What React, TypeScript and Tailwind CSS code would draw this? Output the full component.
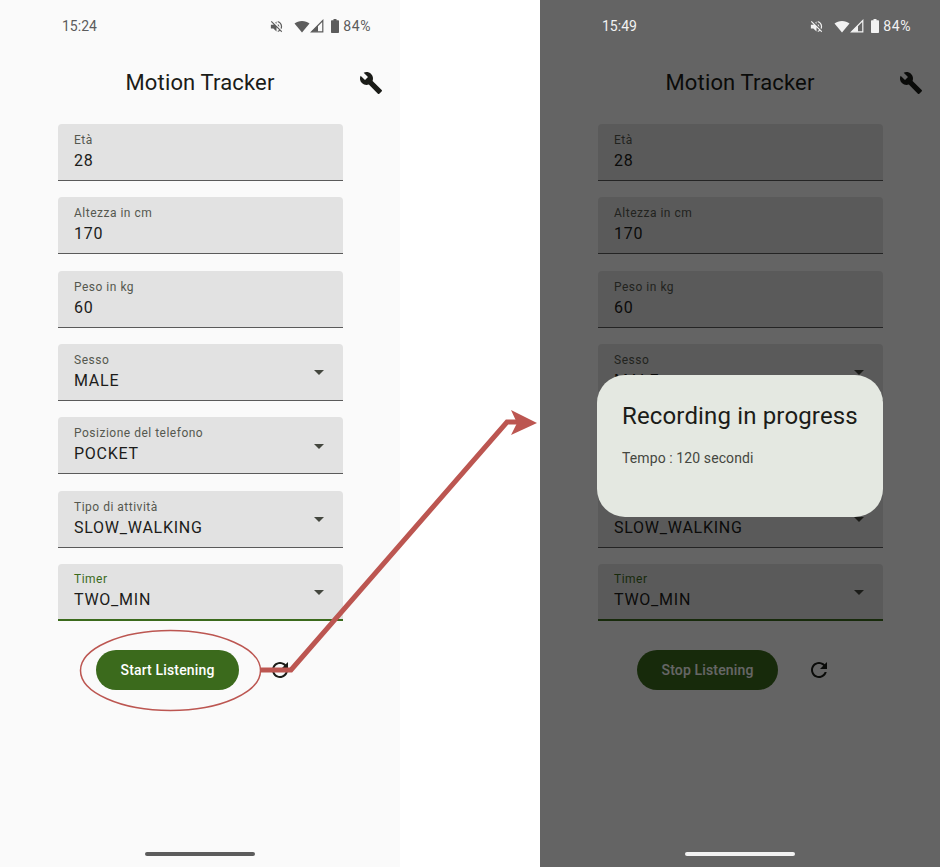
import React from 'react';

const fields = [
    { label: 'Età', value: '28' },
    { label: 'Altezza in cm', value: '170' },
    { label: 'Peso in kg', value: '60' },
    { label: 'Sesso', value: 'MALE', dropdown: true },
    { label: 'Posizione del telefono', value: 'POCKET', dropdown: true },
    { label: 'Tipo di attività', value: 'SLOW_WALKING', dropdown: true },
    { label: 'Timer', value: 'TWO_MIN', dropdown: true, focused: true },
];

const StatusBar = ({ time, dark }: { time: string; dark: boolean }) => (
    <div className={`relative z-20 h-[52px] flex items-center justify-between pl-[62px] pr-[29px] text-[14px] ${dark ? 'text-[#f2f2f2]' : 'text-[#5c5c5c]'}`}>
        <span>{time}</span>
        <div className="flex items-center">
            <svg width="15" height="15" viewBox="0 0 24 24" fill="currentColor" className="mr-[10px]">
                <path d="M16.500 12c0-1.770-1.020-3.290-2.500-4.030v2.210l2.450 2.450c.03-.2.05-.41.05-.63zm2.500 0c0 .94-.2 1.820-.54 2.640l1.510 1.510C20.630 14.910 21 13.500 21 12c0-4.280-2.990-7.860-7-8.770v2.060c2.890.86 5 3.540 5 6.710zM4.270 3L3 4.270 7.730 9H3v6h4l5 5v-6.730l4.250 4.250c-.67.52-1.420.93-2.250 1.180v2.060c1.380-.31 2.630-.95 3.690-1.810L19.730 21 21 19.730l-9-9L4.270 3zM12 4L9.910 6.090 12 8.180V4z" />
            </svg>
            <svg width="16" height="13" viewBox="0 0 16 13" fill="currentColor">
                <path d="M8 12.500L.5 3.600C2.500 1.900 5.100 1 8 1s5.500.9 7.500 2.600L8 12.500z" />
            </svg>
            <svg width="14" height="14" viewBox="0 0 14 14" fill="none" stroke="currentColor" strokeWidth="1.200" className="mr-[7px]">
                <path d="M12.800 1.500v11.300H1.500L12.800 1.500z" />
                <path d="M1.500 12.800L8 6.300v6.500z" fill="currentColor" stroke="none" />
            </svg>
            <svg width="8" height="14" viewBox="0 0 8 14" fill="currentColor" className="mr-[4px]">
                <path d="M2.500 0h3v1.200H7c.6 0 1 .4 1 1V13c0 .6-.4 1-1 1H1c-.6 0-1-.4-1-1V2.200c0-.6.4-1 1-1h1.500V0z" />
            </svg>
            <span className="tracking-[0.6px]">84%</span>
        </div>
    </div>
);

const Field = ({ label, value, dropdown, focused }: { label: string; value: string; dropdown?: boolean; focused?: boolean }) => (
    <div className={`h-[57px] shrink-0 rounded-t-[4px] bg-[#e2e2e2] flex items-center justify-between pl-4 pr-3 pt-[1px] ${focused ? 'border-b-2 border-[#3b6a1c]' : 'border-b-[1.5px] border-[#5a5a5a]'}`}>
        <div className="flex flex-col">
            <span className={`text-[12px] leading-[16px] tracking-[0.5px] ${focused ? 'text-[#3b6a1c]' : 'text-[#55584f]'}`}>{label}</span>
            <span className="mt-[1px] text-[16px] leading-[24px] tracking-[0.75px] text-[#1c1c1a]">{value}</span>
        </div>
        {dropdown && (
            <svg width="24" height="24" viewBox="0 0 24 24" fill="#44473f">
                <path d="M7 10l5 5 5-5z" />
            </svg>
        )}
    </div>
);

const Phone = ({ time, recording }: { time: string; recording: boolean }) => (
    <div className="relative w-[400px] h-[867px] bg-[#fafafa] overflow-hidden">
        <StatusBar time={time} dark={recording} />
        <div className="relative h-[62px] flex items-center justify-center">
            <span className="text-[22px] tracking-[0.15px] text-[#1b1c18] -mt-[2px]">Motion Tracker</span>
            <svg width="24" height="24" viewBox="0 0 24 24" fill="#1b1c18" className="absolute left-[359px] top-[19px]">
                <path d="M22.700 19l-9.100-9.100c.9-2.300.4-5-1.500-6.900-2-2-5-2.400-7.400-1.300L9 6 6 9 1.600 4.700C.4 7.100.9 10.100 2.900 12.100c1.900 1.900 4.600 2.400 6.900 1.500l9.100 9.100c.4.4 1 .4 1.400 0l2.300-2.300c.5-.4.5-1.100.1-1.400z" />
            </svg>
        </div>
        <div className="mt-[10px] ml-[58px] w-[284.500px] flex flex-col gap-[16.330px]">
            {fields.map((f) => (
                <Field key={f.label} {...f} />
            ))}
        </div>
        <div className="mt-[29px] flex items-center">
            <div className={`h-[40px] rounded-full bg-[#3b6a1c] flex items-center justify-center pt-[1px] text-[14px] font-medium tracking-[0.15px] text-white ${recording ? 'w-[141px] ml-[97px]' : 'w-[143px] ml-[96px]'}`}>
                {recording ? 'Stop Listening' : 'Start Listening'}
            </div>
            <svg width="24" height="24" viewBox="0 0 24 24" fill="#1b1c18" className="ml-[29px]">
                <path d="M17.650 6.350C16.200 4.900 14.210 4 12 4c-4.420 0-7.990 3.580-7.990 8s3.570 8 7.990 8c3.730 0 6.840-2.550 7.730-6h-2.080c-.82 2.330-3.040 4-5.650 4-3.310 0-6-2.690-6-6s2.690-6 6-6c1.660 0 3.140.69 4.220 1.780L13 11h7V4l-2.350 2.350z" />
            </svg>
        </div>
        {recording && <div className="absolute inset-0 z-10 bg-black/60" />}
        <div className={`absolute z-20 bottom-[11px] left-[145px] w-[110px] h-[4px] rounded-full ${recording ? 'bg-[#f2f2f2]' : 'bg-[#5c5c5c]'}`} />
        {recording && (
            <div className="absolute z-20 left-[57px] top-[375px] w-[286px] h-[142px] rounded-[28px] bg-[#e4e8e1] pl-[25px] pt-[25px]">
                <div className="text-[24px] leading-[32px] tracking-[0.15px] text-[#1b1c18]">Recording in progress</div>
                <div className="mt-[16px] text-[14px] leading-[20px] tracking-[0.1px] text-[#44473f]">Tempo : 120 secondi</div>
            </div>
        )}
    </div>
);

export default function App() {
    return (
        <div className="relative w-[940px] h-[867px] bg-white flex justify-between font-['Roboto',sans-serif]">
            <Phone time="15:24" recording={false} />
            <Phone time="15:49" recording={true} />
            {/* annotation drawn over the left screen */}
            <svg width="940" height="867" className="absolute inset-0 z-30 pointer-events-none">
                <ellipse cx="170.500" cy="670.500" rx="90" ry="40" fill="none" stroke="#bc5651" strokeWidth="1.500" />
                <polyline points="260,670 291,670 507,422 520,422" fill="none" stroke="#bc5651" strokeWidth="5" />
                <polygon points="511,410 537,423 511,435 517,423" fill="#bc5651" />
            </svg>
        </div>
    );
}
